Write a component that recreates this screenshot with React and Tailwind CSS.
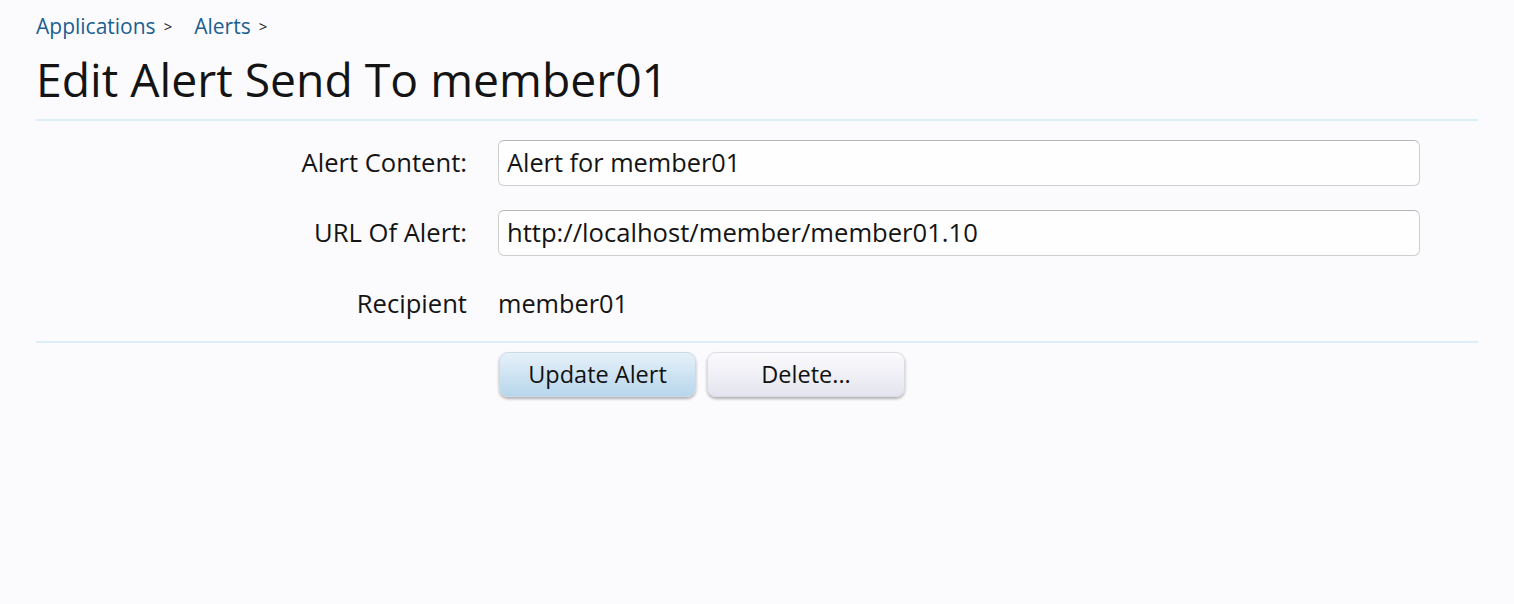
export default function App() {
  const font = { fontFamily: '"Open Sans", "Liberation Sans", Arial, sans-serif' };
  return (
    <div className="min-h-[604px] w-full bg-[#fbfbfe] text-[#141414]" style={font}>
      <div className="px-[36px] pt-[12px]">
        <div className="flex items-center text-[21px] leading-[28px]">
          <a className="text-[#1c5f8f]">Applications</a>
          <span className="ml-[8px] text-[15px] text-[#222]">&gt;</span>
          <a className="ml-[22px] text-[#1c5f8f]">Alerts</a>
          <span className="ml-[8px] text-[15px] text-[#222]">&gt;</span>
        </div>
        <h1 className="mt-[14px] text-[46.3px] leading-[52px] text-[#141414]">Edit Alert Send To member01</h1>
        <div className="mt-[13px] h-[2px] bg-[#dbeef9]" />
        <div className="grid grid-cols-[431px_922px] gap-x-[31px] pt-[19px]">
          <div className="flex h-[46px] items-center justify-end text-[25.6px]">Alert Content:</div>
          <div className="flex h-[46px] items-center rounded-[6px] border border-[#cfcfcf] border-t-[#b5b5b5] bg-[#fefefe] px-[8px] text-[25.3px]">Alert for member01</div>
          <div className="col-span-2 h-[24px]" />
          <div className="flex h-[46px] items-center justify-end text-[25.6px]">URL Of Alert:</div>
          <div className="flex h-[46px] items-center rounded-[6px] border border-[#cfcfcf] border-t-[#b5b5b5] bg-[#fefefe] px-[8px] text-[25.6px]">http://localhost/member/member01.10</div>
          <div className="col-span-2 h-[25px]" />
          <div className="flex h-[46px] items-center justify-end text-[25.6px]">Recipient</div>
          <div className="flex h-[46px] items-center text-[25.3px]">member01</div>
        </div>
        <div className="mt-[14px] h-[2px] bg-[#dbeef9]" />
        <div className="flex gap-[11px] pl-[463px] pt-[9px]">
          <button className="h-[45px] w-[197px] rounded-[9px] border border-[#c9dbe8] bg-gradient-to-b from-[#e6f1f9] to-[#b7d6ec] text-[23.5px] text-[#111] shadow-[0_2px_3px_rgba(0,0,0,0.3)]">Update Alert</button>
          <button className="h-[45px] w-[198px] rounded-[9px] border border-[#dcdce4] bg-gradient-to-b from-[#fbfbfd] to-[#e4e4ee] text-[23.5px] text-[#111] shadow-[0_2px_3px_rgba(0,0,0,0.3)]">Delete...</button>
        </div>
      </div>
    </div>
  );
}
